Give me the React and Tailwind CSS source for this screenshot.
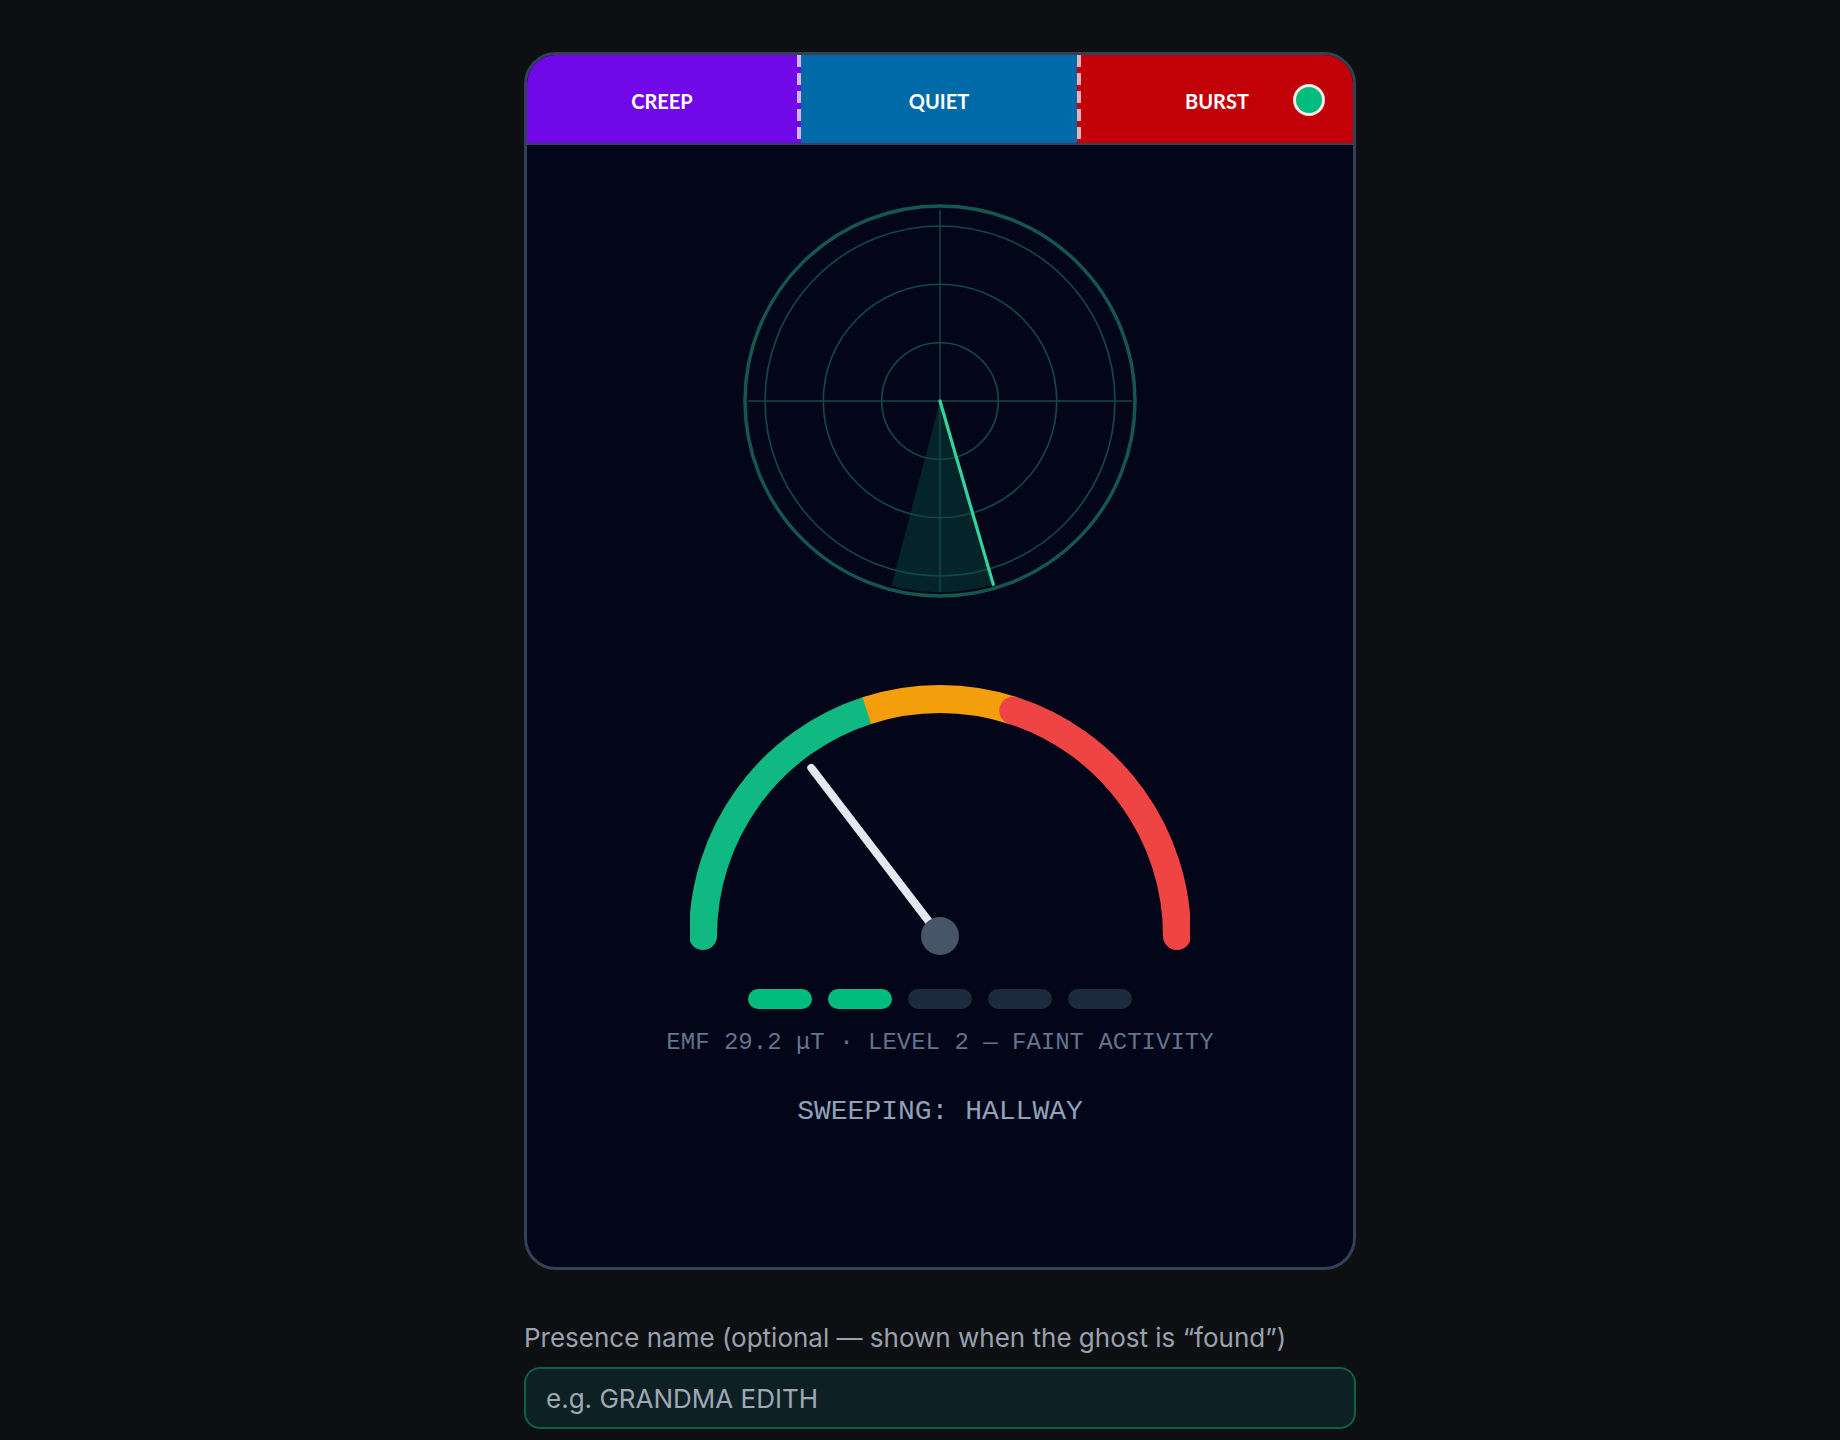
import React from 'react';

const PHASES = [
  { label: 'CREEP', bg: 'bg-[#7008e7]', width: 'w-[270px]' },
  { label: 'QUIET', bg: 'bg-[#0069a8]', width: 'w-[276px]' },
  { label: 'BURST', bg: 'bg-[#c10007]', width: 'flex-1' },
];

const LEVELS = [true, true, false, false, false];

// point on a circle, angle in degrees (0 = right, 90 = up)
const pt = (cx, cy, r, deg) => {
  const a = (deg * Math.PI) / 180;
  return [cx + r * Math.cos(a), cy - r * Math.sin(a)];
};

const arc = (cx, cy, r, from, to) => {
  const [x1, y1] = pt(cx, cy, r, from);
  const [x2, y2] = pt(cx, cy, r, to);
  return `M ${x1} ${y1} A ${r} ${r} 0 0 1 ${x2} ${y2}`;
};

function Radar() {
  const c = 200;
  // sweep angles measured from straight down, toward +x
  const down = (r, deg) => {
    const a = (deg * Math.PI) / 180;
    return [c + r * Math.sin(a), c + r * Math.cos(a)];
  };
  const [lx, ly] = down(191, -14.7);
  const [rx, ry] = down(191, 16.2);

  return (
    <svg width="400" height="400" viewBox="0 0 400 400">
      <path d={`M ${c} ${c} L ${lx} ${ly} A 191 191 0 0 0 ${rx} ${ry} Z`} fill="#04242a" />
      <circle cx={c} cy={c} r="195" fill="none" stroke="#14574f" strokeWidth="3.5" />
      <circle cx={c} cy={c} r="175" fill="none" stroke="#0f4c45" strokeWidth="1.6" />
      <circle cx={c} cy={c} r="116.7" fill="none" stroke="#0f4c45" strokeWidth="1.6" />
      <circle cx={c} cy={c} r="58.3" fill="none" stroke="#0f4c45" strokeWidth="1.6" />
      <line x1={c - 192} y1={c} x2={c + 192} y2={c} stroke="#0f4c45" strokeWidth="1.4" />
      <line x1={c} y1={c - 191} x2={c} y2={c + 191} stroke="#0f4c45" strokeWidth="1.4" />
      <line x1={c} y1={c} x2={rx} y2={ry} stroke="#34d399" strokeWidth="3.2" strokeLinecap="round" />
    </svg>
  );
}

function Gauge({ value }) {
  const cx = 250;
  const cy = 257;
  const r = 237;
  const angle = 180 - (value / 100) * 180;
  const [tx, ty] = pt(cx, cy, 211.7, angle);

  return (
    <svg width="500" height="280" viewBox="0 0 500 280">
      <path d={arc(cx, cy, r, 180, 108)} fill="none" stroke="#10b981" strokeWidth="28" strokeLinecap="round" />
      <path d={arc(cx, cy, r, 108, 72)} fill="none" stroke="#f59e0b" strokeWidth="28" strokeLinecap="butt" />
      <path d={arc(cx, cy, r, 72, 0)} fill="none" stroke="#ef4444" strokeWidth="28" strokeLinecap="round" />
      <line x1={cx} y1={cy} x2={tx} y2={ty} stroke="#e2e8f0" strokeWidth="8" strokeLinecap="round" />
      <circle cx={cx} cy={cy} r="19" fill="#475569" />
    </svg>
  );
}

export default function App() {
  return (
    <div className="min-h-screen bg-[#0e0f13] pt-[52px] pl-10 flex justify-center">
      <div className="w-[832px] flex flex-col">
        {/* ── Meter card ─────────────────────────── */}
        <div className="rounded-[32px] border-[3px] border-[#314158] overflow-hidden bg-[#020618]">
          <div className="relative flex h-[90px] border-b-2 border-[#314158] font-['Lato',sans-serif]">
            {PHASES.map((p, i) => (
              <React.Fragment key={p.label}>
                {i === 1 && (
                  <div className="w-1 bg-[#7008e7] bg-[repeating-linear-gradient(to_bottom,#d4b5f8_0_12px,transparent_12px_18px)]" />
                )}
                {i === 2 && (
                  <div className="w-1 bg-[#c10007] bg-[repeating-linear-gradient(to_bottom,#ecb2b4_0_12px,transparent_12px_18px)]" />
                )}
                <div className={`${p.width} ${p.bg} flex items-center justify-center pt-[3px] text-white text-[20px] font-bold`}>
                  {p.label}
                </div>
              </React.Fragment>
            ))}
            <span className="absolute right-[28px] top-[29px] w-[32px] h-[32px] rounded-full bg-[#00bc7d] border-[3px] border-[#fce8e8]" />
          </div>

          <div className="h-[1122px] flex flex-col items-center pt-[56px]">
            <Radar />
            <div className="mt-[78px]">
              <Gauge value={29.2} />
            </div>
            <div className="mt-[30px] flex gap-4">
              {LEVELS.map((on, i) => (
                <span key={i} className={`w-16 h-5 rounded-full ${on ? 'bg-[#00bc7d]' : 'bg-[#1d293d]'}`} />
              ))}
            </div>
            <p className="mt-[18px] font-['Liberation_Mono',monospace] text-[24px] leading-8 text-[#62748e]">
              EMF 29.2 μT · LEVEL 2 — FAINT ACTIVITY
            </p>
            <p className="mt-[35px] font-['Liberation_Mono',monospace] text-[28px] leading-9 text-[#90a1b9]">
              SWEEPING: HALLWAY
            </p>
          </div>
        </div>

        {/* ── Presence name ─────────────────────── */}
        <label className="mt-[50px] font-['Inter',sans-serif] text-[26px] leading-9 text-[#99a1af]">
          Presence name (optional — shown when the ghost is “found”)
        </label>
        <input
          className="mt-[11px] h-[62px] rounded-2xl border-2 border-[#0e6146] bg-[#0d2023] px-5 font-['Inter',sans-serif] text-[26px] text-gray-200 placeholder:text-[#a1a8b5] outline-none"
          placeholder="e.g. GRANDMA EDITH"
        />
      </div>
    </div>
  );
}
